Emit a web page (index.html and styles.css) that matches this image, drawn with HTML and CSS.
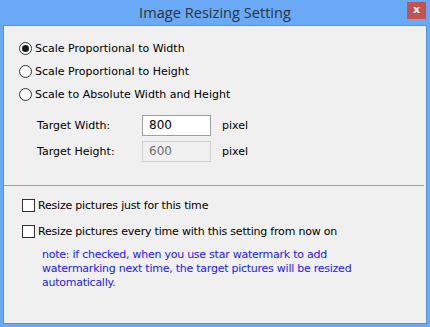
FILE: index.html
```html
<!DOCTYPE html>
<html lang="en">
<head>
  <meta charset="UTF-8">
  <title>Image Resizing Setting</title>
  <link rel="stylesheet" href="styles.css">
</head>
<body>
  <div class="window">
    <div class="titlebar">
      <div class="title">Image Resizing Setting</div>
      <div class="close">x</div>
    </div>

    <div class="content">
      <div class="options">
        <div class="row"><span class="radio checked"></span>Scale Proportional to Width</div>
        <div class="row"><span class="radio"></span>Scale Proportional to Height</div>
        <div class="row"><span class="radio"></span>Scale to Absolute Width and Height</div>

        <div class="fields">
          <div class="field">
            <label>Target Width:</label>
            <div class="input">800</div>
            <span class="unit">pixel</span>
          </div>
          <div class="field">
            <label>Target Height:</label>
            <div class="input disabled">600</div>
            <span class="unit">pixel</span>
          </div>
        </div>
      </div>

      <div class="sep"></div>

      <div class="checks">
        <div class="row"><span class="check"></span>Resize pictures just for this time</div>
        <div class="row"><span class="check"></span>Resize pictures every time with this setting from now on</div>
        <div class="note">note: if checked, when you use star watermark to add watermarking next time, the target pictures will be resized automatically.</div>
      </div>
    </div>
  </div>
</body>
</html>
```

FILE: styles.css
```css
* {
  margin: 0; padding: 0; box-sizing: border-box;
}
body {
  width: 430px;
  height: 327px;
  overflow: hidden;
  font-family: 'DejaVu Sans', sans-serif;
  font-size: 11px;
  color: #000;
}
.window {
  width: 430px;
  height: 327px;
  background: #6aa9f5;
  padding: 0 3px 3px 3px;
  display: flex;
  flex-direction: column;
}
.titlebar {
  height: 25px;
  display: flex;
  align-items: center;
  justify-content: center;
  position: relative;
}
.title {
  font-family: 'Open Sans', sans-serif;
  font-size: 14.6px;
  color: #2b3440;
  margin-top: -1px;
}
.close {
  position: absolute;
  right: 1px;
  top: 2px;
  width: 19px;
  height: 17px;
  background: #c75050;
  color: #fff;
  font-family: 'DejaVu Sans', sans-serif;
  font-weight: bold;
  font-size: 11px;
  line-height: 15px;
  text-align: center;
}
.content {
  flex-grow: 1;
  background: #f0f0f0;
  border: 1px solid #5a8fd0;
  display: flex;
  flex-direction: column;
}
.options {
  padding: 11px 0 0 15px;
}
.row {
  display: flex;
  align-items: center;
  height: 23px;
}
.radio {
  width: 13px;
  height: 13px;
  border: 1px solid #333;
  border-radius: 50%;
  background: #fff;
  margin-right: 3px;
  position: relative;
}
.radio.checked::after {
  content: "";
  position: absolute;
  left: 2px; top: 2px;
  width: 7px; height: 7px;
  border-radius: 50%;
  background: #1a1a1a;
}
.fields {
  margin-top: 6px;
}
.field {
  display: flex;
  align-items: center;
  height: 26px;
  padding-left: 18px;
}
.field label {
  width: 105px;
}
.input {
  width: 69px;
  height: 21px;
  border: 1px solid #a0a0a0;
  background: #fff;
  padding-left: 6px;
  line-height: 19px;
  font-size: 12px;
}
.input.disabled {
  border-color: #d0d0d0;
  background: #f0f0f0;
  color: #6d6d6d;
}
.unit {
  margin-left: 11px;
}
.sep {
  height: 1px;
  background: #a0a0a0;
  margin: 21px 2px 0 0;
}
.checks {
  padding: 6px 0 0 18px;
  letter-spacing: -0.2px;
}
.checks .row {
  height: 26px;
}
.check {
  width: 13px;
  height: 13px;
  border: 1px solid #333;
  background: #fff;
  margin-right: 3px;
}
.note {
  color: #2222ee;
  padding-left: 20px;
  padding-right: 40px;
  line-height: 14px;
  margin-top: 4px;
  letter-spacing: -0.25px;
}
```
